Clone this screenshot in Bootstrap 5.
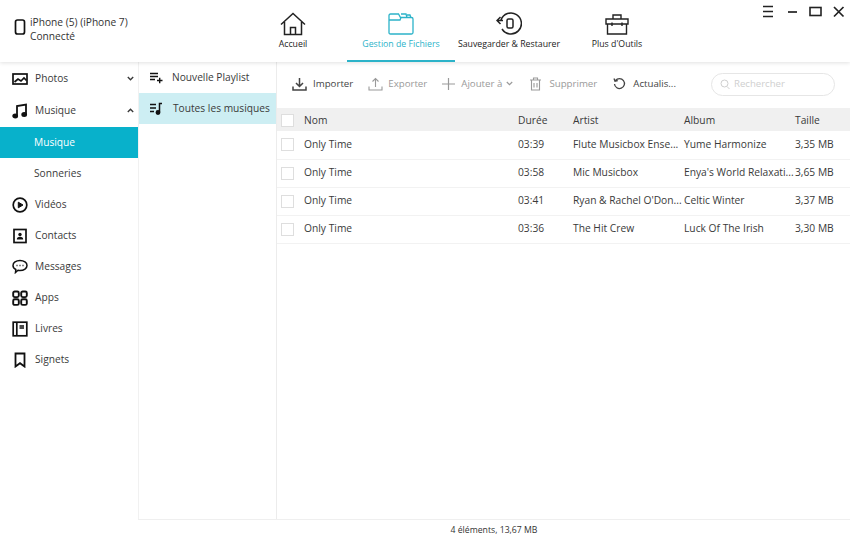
<!DOCTYPE html>
<html lang="fr">

<head>
  <meta charset="UTF-8" />
  <meta name="viewport" content="width=device-width, initial-scale=1" />
  <title>Gestion de Fichiers</title>
  <link href="https://cdn.jsdelivr.net/npm/bootstrap@5.3.0/dist/css/bootstrap.min.css" rel="stylesheet" />
  <style>
    html, body {
      height: 540px;
      overflow: hidden;
    }

    body {
      font-family: "Open Sans", "Noto Sans", sans-serif;
      font-size: 10.2px;
      color: #3a3a3a;
      background: #fff;
    }

    svg {
      flex: none;
      display: block;
      fill: none;
      stroke: currentColor;
    }

    .app-top {
      height: 62px;
      box-shadow: 0 1px 4px rgba(0, 0, 0, .12);
      position: relative;
      z-index: 2;
    }

    .device {
      width: 239px;
      padding: 15px 0 0 14px;
      line-height: 14px;
      color: #333;
    }

    .device svg {
      color: #111;
      margin-top: 4px;
      margin-right: 4px;
    }

    .top-tab {
      width: 108px;
      height: 62px;
      padding-top: 12px;
      font-size: 8.75px;
      color: #222;
      white-space: nowrap;
    }

    .top-tab.on {
      color: #2cb3c9;
      border-bottom: 2px solid #2cb3c9;
    }

    .top-tab svg {
      margin-bottom: 2px;
    }

    .win-btns {
      position: absolute;
      top: 4px;
      right: 4px;
      color: #222;
    }

    .app-body {
      height: 457px;
    }

    .side-one {
      width: 138px;
      padding-top: 1px;
      height: 478px;
    }

    .side-item {
      height: 31px;
      padding-left: 12px;
      color: #3a3a3a;
    }

    .side-item svg.ico {
      color: #111;
      width: 16px;
      margin-right: 7px;
    }

    .side-item.sub {
      padding-left: 34px;
    }

    .side-item.on {
      background: #08b1cb;
      color: #fff;
    }

    .side-gap {
      margin-top: 1px;
    }

    .side-two {
      width: 139px;
      border-left: 1px solid #f1f1f1;
      border-right: 1px solid #ececec;
    }

    .play-item {
      height: 31px;
      padding-left: 10px;
    }

    .play-item svg {
      color: #111;
      margin-right: 9px;
    }

    .play-item.on {
      background: #cdeef3;
    }

    .play-item.on span {
      margin-left: 1px;
    }

    .tool-bar {
      height: 46px;
      padding: 0 15px 2px 15px;
      color: #444;
      font-size: 9.7px;
    }

    .tool-btn {
      margin-right: 15px;
      white-space: nowrap;
    }

    .tool-btn svg {
      margin-right: 6px;
    }

    .tool-btn.off {
      color: #9a9a9a;
      margin-right: 14px;
    }

    .tool-btn.thin svg:first-child {
      margin-right: 5px;
    }

    .tool-btn.wide {
      margin-right: 16px;
    }

    .tool-btn.roomy svg:first-child {
      margin-right: 7px;
    }

    .find-box {
      width: 124px;
      height: 23px;
      border: 1px solid #e6e6e6;
      border-radius: 12px;
      color: #cfcfcf;
      padding-left: 8px;
      margin-left: auto;
      font-size: 9.6px;
    }

    .song-table {
      table-layout: fixed;
      width: 573px;
      margin: 0;
      font-size: 10.25px;
      --bs-table-color: #3a3a3a;
    }

    .song-table th,
    .song-table td {
      padding: 0;
      height: 28px;
      font-weight: 400;
      vertical-align: middle;
      white-space: nowrap;
      border-bottom: 1px solid #f2f2f2;
    }

    .song-table th {
      height: 23px;
      padding-top: 2px;
      background: #f0f0f0;
      border-bottom: 0;
    }

    .tick {
      display: block;
      width: 13px;
      height: 13px;
      margin-left: 4px;
      border: 1px solid #dedede;
      background: #fff;
    }

    .foot-bar {
      height: 21px;
      margin-left: 138px;
      padding-top: 2px;
      border-top: 1px solid #efefef;
      font-size: 8.7px;
      color: #333;
    }
  </style>
</head>

<body>
  <header class="app-top d-flex">
    <div class="device d-flex">
      <svg width="12" height="16" viewBox="0 0 12 16" stroke-width="1.7"><rect x="1.500" y="1" width="9" height="14" rx="2" /></svg>
      <div>iPhone (5) (iPhone 7)<br />Connecté</div>
    </div>
    <div class="top-tab d-flex flex-column align-items-center">
      <svg width="26" height="24" viewBox="0 0 26 24" stroke-width="1.5"><path d="M1 12.500 13 1.500l12 11M4.500 10v12.500h17V10M10.500 22.500v-7h5v7" /></svg>
      <span>Accueil</span>
    </div>
    <div class="top-tab on d-flex flex-column align-items-center">
      <svg width="26" height="24" viewBox="0 0 26 24" stroke-width="1.3"><path d="M1 21V3.500q0-1.500 1.500-1.500h8l2 3.500h11q1.500 0 1.500 1.500v13.500q0 1.500-1.500 1.500h-21q-1.500 0-1.500-1.500zM1 8h11l1-2.500M13 2h5l1 3.500M19 3h3l1 3" /></svg>
      <span>Gestion de Fichiers</span>
    </div>
    <div class="top-tab d-flex flex-column align-items-center">
      <svg width="26" height="24" viewBox="0 0 26 24" stroke-width="1.5"><path d="M5 8a10.500 10.500 0 1 1 1 9M1 8.500h6M4.500 5 1 8.500 4.500 12" /><rect x="11" y="7" width="6" height="9" rx="1.500" /></svg>
      <span>Sauvegarder &amp; Restaurer</span>
    </div>
    <div class="top-tab d-flex flex-column align-items-center">
      <svg width="26" height="24" viewBox="0 0 26 24" stroke-width="1.4"><path d="M2 7h22v5H2zM3.500 12v10h19V12M9 7V3h8v4M8 10.500v3.500M18 10.500v3.500" /></svg>
      <span>Plus d'Outils</span>
    </div>
    <div class="win-btns d-flex gap-2">
      <svg width="15" height="15" viewBox="0 0 15 15" stroke-width="1.6"><path d="M1 2.500h10M1 7.500h10M1 12.500h10" /></svg>
      <svg width="15" height="15" viewBox="0 0 15 15" stroke-width="1.7"><path d="M3 8h9" /></svg>
      <svg width="15" height="15" viewBox="0 0 15 15" stroke-width="1.6"><rect x="2" y="3.500" width="11" height="8" /></svg>
      <svg width="15" height="15" viewBox="0 0 15 15" stroke-width="1.7"><path d="m3 3 9.500 9.500M12.500 3 3 12.500" /></svg>
    </div>
  </header>

  <div class="app-body d-flex">
    <nav class="side-one flex-shrink-0">
      <div class="side-item d-flex align-items-center">
        <svg class="ico" width="16" height="14" viewBox="0 0 16 14" stroke-width="1.7"><rect x="1" y="2" width="14" height="10" /><path d="m2.500 10 3.500-3 3 2 3-3 2.500 2.500" /></svg>
        Photos
        <svg class="ms-auto me-1" width="7" height="5" viewBox="0 0 7 5" stroke-width="1.400"><path d="m.8 1 2.700 2.700L6.200 1" /></svg>
      </div>
      <div class="side-item side-gap d-flex align-items-center">
        <svg class="ico" width="16" height="16" viewBox="0 0 16 16" stroke-width="1.800"><path d="M5 13V3l9-1.500V11" /><ellipse cx="3.200" cy="13" rx="2" ry="1.600" fill="currentColor" /><ellipse cx="12.200" cy="11.500" rx="2" ry="1.600" fill="currentColor" /></svg>
        Musique
        <svg class="ms-auto me-1" width="7" height="5" viewBox="0 0 7 5" stroke-width="1.400"><path d="M.8 4 3.500 1.300 6.200 4" /></svg>
      </div>
      <div class="side-item side-gap sub on d-flex align-items-center">Musique</div>
      <div class="side-item sub d-flex align-items-center">Sonneries</div>
      <div class="side-item d-flex align-items-center">
        <svg class="ico" width="16" height="16" viewBox="0 0 16 16" stroke-width="1.700"><circle cx="8" cy="8" r="6.800" /><path d="M6.300 5.200v5.600L11 8z" fill="currentColor" stroke-width="1" /></svg>
        Vidéos
      </div>
      <div class="side-item d-flex align-items-center">
        <svg class="ico" width="16" height="16" viewBox="0 0 16 16" stroke-width="1.700"><rect x="2" y="1.500" width="12" height="13" /><circle cx="8" cy="6.500" r="1.700" fill="currentColor" stroke="none" /><path d="M4.800 11.500q0-2.800 3.200-2.800t3.200 2.800z" fill="currentColor" stroke="none" /></svg>
        Contacts
      </div>
      <div class="side-item d-flex align-items-center">
        <svg class="ico" width="16" height="15" viewBox="0 0 16 15" stroke-width="1.500"><path d="M8 1.500c4 0 7 2.200 7 5s-3 5-7 5q-1 0-2-.2L3.500 13.500l.3-3C2 9.600 1 8.100 1 6.500c0-2.800 3-5 7-5z" /><path d="M4.500 6.500h1M7.500 6.500h1M10.500 6.500h1" stroke-width="1.500" /></svg>
        Messages
      </div>
      <div class="side-item d-flex align-items-center">
        <svg class="ico" width="16" height="16" viewBox="0 0 16 16" stroke-width="1.900"><rect x="1.200" y="1.500" width="5.600" height="5.600" rx="1.500" /><rect x="9.200" y="1.500" width="5.600" height="5.600" rx="1.500" /><rect x="1.200" y="9.300" width="5.600" height="5.600" rx="1.500" /><rect x="9.200" y="9.300" width="5.600" height="5.600" rx="1.500" /></svg>
        Apps
      </div>
      <div class="side-item d-flex align-items-center">
        <svg class="ico" width="16" height="16" viewBox="0 0 16 16" stroke-width="1.700"><rect x="1.200" y="1.200" width="13.600" height="13.600" /><path d="M4.800 1.200v13.600M7.500 5h4.500M7.500 7h4.500" /></svg>
        Livres
      </div>
      <div class="side-item d-flex align-items-center">
        <svg class="ico" width="16" height="16" viewBox="0 0 16 16" stroke-width="1.800"><path d="M3.500 1.500h9v13L8 11.200 3.500 14.500z" /></svg>
        Signets
      </div>
    </nav>

    <aside class="side-two flex-shrink-0">
      <div class="play-item d-flex align-items-center">
        <svg width="14" height="12" viewBox="0 0 14 12" stroke-width="1.400"><path d="M1 1.500h8M1 4.500h8M1 7.500h5M8 8.500h5.500M10.700 5.700v5.600" /></svg>
        <span>Nouvelle Playlist</span>
      </div>
      <div class="play-item on d-flex align-items-center">
        <svg width="14" height="13" viewBox="0 0 14 13" stroke-width="1.500"><path d="M1 2.500h6M1 6h6M1 9.500h4M10.500 10V1.500H13" /><circle cx="9" cy="10.500" r="1.700" fill="currentColor" /></svg>
        <span>Toutes les musiques</span>
      </div>
    </aside>

    <main class="flex-grow-1">
      <div class="tool-bar d-flex align-items-center">
        <div class="tool-btn d-flex align-items-center">
          <svg width="15" height="14" viewBox="0 0 15 14" stroke-width="1.500"><path d="M7.500 1v8M4 6l3.500 3.500L11 6M1 9.500V13h13V9.500" /></svg>
          Importer
        </div>
        <div class="tool-btn thin off d-flex align-items-center">
          <svg width="15" height="14" viewBox="0 0 15 14" stroke-width="1.100"><path d="M7.500 10V1.500M4.500 4.500l3-3 3 3M1 9.500V13h13V9.500" /></svg>
          Exporter
        </div>
        <div class="tool-btn thin off wide d-flex align-items-center">
          <svg width="15" height="14" viewBox="0 0 15 14" stroke-width="1.200"><path d="M7.500 1v12M1 7h13" /></svg>
          Ajouter à
          <svg class="ms-1 me-0" width="7" height="5" viewBox="0 0 7 5" stroke-width="1.200"><path d="m.8 1 2.700 2.700L6.200 1" /></svg>
        </div>
        <div class="tool-btn off wide roomy d-flex align-items-center">
          <svg width="13" height="14" viewBox="0 0 13 14" stroke-width="1.100"><path d="M1 3h11M4.500 3V1h4v2M2.500 3v10h8V3M5 6v4.500M8 6v4.500" /></svg>
          Supprimer
        </div>
        <div class="tool-btn roomy d-flex align-items-center">
          <svg width="13" height="13" viewBox="0 0 13 13" stroke-width="1.300"><path d="M2.500 3.500A5 5 0 1 1 1.500 7M1 1.500l1 2.800 2.800-.6" /></svg>
          Actualis...
        </div>
        <div class="find-box d-flex align-items-center">
          <svg class="me-1" width="10" height="11" viewBox="0 0 10 11" stroke-width="1"><circle cx="4.500" cy="4.500" r="3.500" /><path d="m7 7.500 2.500 2.500" /></svg>
          Rechercher
        </div>
      </div>

      <table class="table song-table">
        <colgroup>
          <col style="width: 27px" />
          <col style="width: 214px" />
          <col style="width: 55px" />
          <col style="width: 111px" />
          <col style="width: 111px" />
          <col style="width: 55px" />
        </colgroup>
        <thead>
          <tr>
            <th><span class="tick"></span></th>
            <th>Nom</th>
            <th>Durée</th>
            <th>Artist</th>
            <th>Album</th>
            <th>Taille</th>
          </tr>
        </thead>
        <tbody>
          <tr>
            <td><span class="tick"></span></td>
            <td>Only Time</td>
            <td>03:39</td>
            <td>Flute Musicbox Ense...</td>
            <td>Yume Harmonize</td>
            <td>3,35 MB</td>
          </tr>
          <tr>
            <td><span class="tick"></span></td>
            <td>Only Time</td>
            <td>03:58</td>
            <td>Mic Musicbox</td>
            <td>Enya's World Relaxati...</td>
            <td>3,65 MB</td>
          </tr>
          <tr>
            <td><span class="tick"></span></td>
            <td>Only Time</td>
            <td>03:41</td>
            <td>Ryan &amp; Rachel O'Don...</td>
            <td>Celtic Winter</td>
            <td>3,37 MB</td>
          </tr>
          <tr>
            <td><span class="tick"></span></td>
            <td>Only Time</td>
            <td>03:36</td>
            <td>The Hit Crew</td>
            <td>Luck Of The Irish</td>
            <td>3,30 MB</td>
          </tr>
        </tbody>
      </table>
    </main>
  </div>

  <footer class="foot-bar d-flex align-items-center justify-content-center">4 éléments, 13,67 MB</footer>

  <script src="https://cdn.jsdelivr.net/npm/bootstrap@5.3.0/dist/js/bootstrap.bundle.min.js"></script>
</body>

</html>
